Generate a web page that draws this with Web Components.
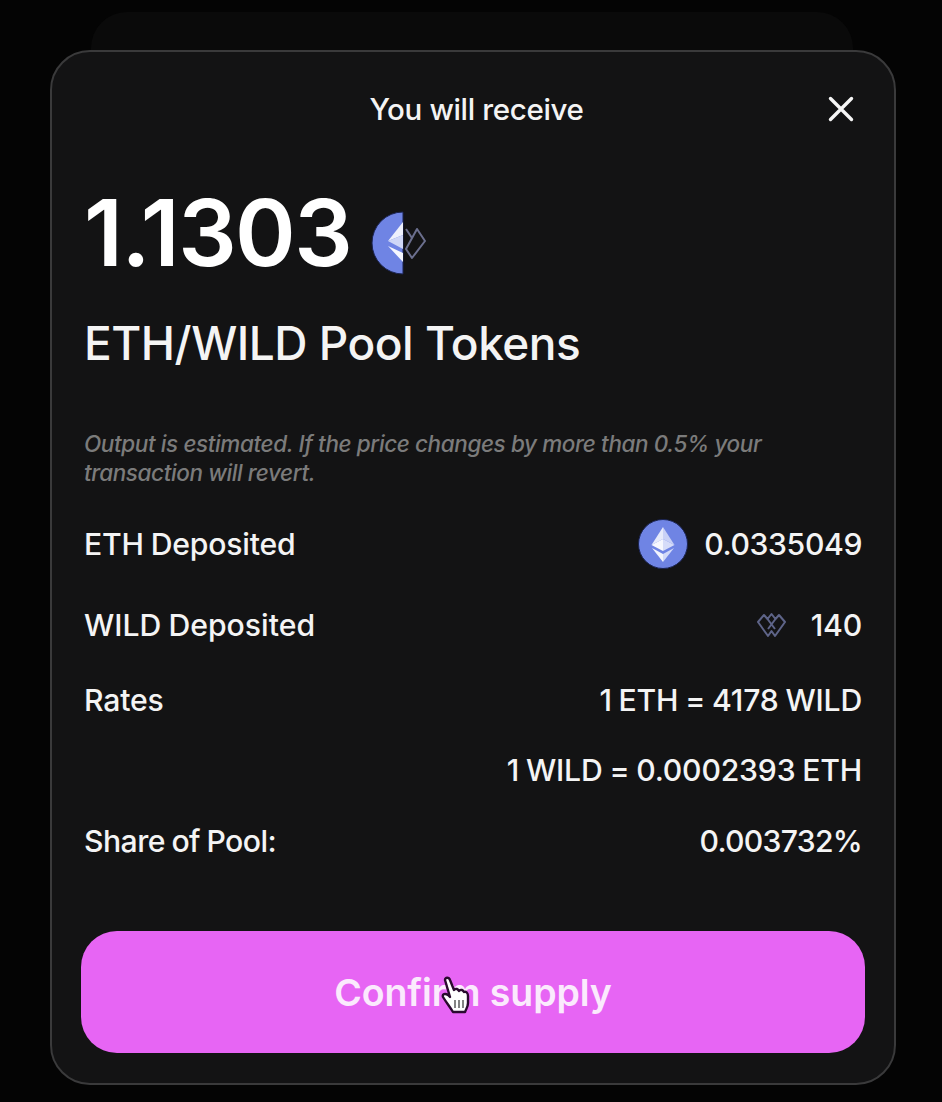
<!DOCTYPE html>
<html>
<head>
<meta charset="utf-8">
<style>
    html, body { margin: 0; padding: 0; background: #040404; }
    body { width: 942px; height: 1102px; overflow: hidden; font-family: Inter, "Liberation Sans", sans-serif; color: #f4f4f4; }
</style>
</head>
<body>
<supply-modal>
    <detail-row label="ETH Deposited" height="81" value-tracking="-0.4"><token-icon kind="eth" slot="icon"></token-icon>0.0335049</detail-row>
    <detail-row label="WILD Deposited" height="81" label-tracking="0"><token-icon kind="wild" slot="icon"></token-icon>140</detail-row>
    <detail-row label="Rates" height="70">1 ETH = 4178 WILD</detail-row>
    <detail-row height="70">1 WILD = 0.0002393 ETH</detail-row>
    <detail-row label="Share of Pool:" height="71" label-tracking="-0.55" value-tracking="-0.75">0.003732%</detail-row>
</supply-modal>

<script>
class TokenIcon extends HTMLElement {
    connectedCallback() {
        const shadow = this.attachShadow({ mode: 'open' })
        const eth = `
            <svg viewBox="0 0 50 50" width="50" height="50">
                <circle cx="25" cy="25" r="24.5" fill="#6f84e4" stroke="#1a2350" stroke-width="1"/>
                <path d="M25 8 13.500 26 25 20z" fill="#e6eafb"/>
                <path d="M25 8 36.500 26 25 20z" fill="#c9d1f6"/>
                <path d="M25 20 13.500 26 25 32z" fill="#f6f7fe"/>
                <path d="M25 20 36.500 26 25 32z" fill="#d6dcf9"/>
                <path d="M14 29 25 43 25 35z" fill="#f2f4fd"/>
                <path d="M36 29 25 43 25 35z" fill="#d3daf8"/>
            </svg>`
        const wild = `
            <svg class="wild" viewBox="0 0 29 26" width="29" height="26" fill="none" stroke="#5e6488" stroke-width="2" stroke-linejoin="round">
                <path d="M1 10 7 3 10.500 7 14.500 2 18.500 7 22 3 28 10 18 24 14.500 19 11 24z"/>
                <path d="M10.500 7 18 17M18.500 7 11 17"/>
            </svg>`
        shadow.innerHTML = `
            <style>
                :host { display: block; line-height: 0; }
                svg.wild { margin-right: 9px; margin-left: 1px; }
            </style>
            ${this.getAttribute('kind') === 'eth' ? eth : wild}
        `
    }
}

class DetailRow extends HTMLElement {
    connectedCallback() {
        const shadow = this.attachShadow({ mode: 'open' })
        const labelTracking = this.getAttribute('label-tracking') || '-0.2'
        const valueTracking = this.getAttribute('value-tracking') || '-0.2'
        shadow.innerHTML = `
            <style>
                :host {
                    display: flex;
                    align-items: center;
                    justify-content: space-between;
                    height: ${this.getAttribute('height')}px;
                    font-size: 30.200px;
                    font-weight: 500;
                    word-spacing: -1px;
                }
                .label { letter-spacing: ${labelTracking}px; }
                .value {
                    display: flex;
                    align-items: center;
                    gap: 16px;
                    letter-spacing: ${valueTracking}px;
                }
            </style>
            <span class="label">${this.getAttribute('label') || ''}</span>
            <span class="value"><slot name="icon"></slot><span><slot></slot></span></span>
        `
    }
}

class SupplyModal extends HTMLElement {
    connectedCallback() {
        const shadow = this.attachShadow({ mode: 'open' })
        shadow.innerHTML = `
            <style>
                :host {
                    display: block;
                    position: relative;
                    width: 942px;
                    height: 1102px;
                    box-sizing: border-box;
                    padding: 50px 46px 0 50px;
                }
                .back {
                    position: absolute;
                    left: 91px;
                    top: 12px;
                    width: 762px;
                    height: 80px;
                    background: #0a0a0a;
                    border-radius: 36px 36px 0 0;
                }
                .card {
                    position: relative;
                    box-sizing: border-box;
                    height: 1035px;
                    background: #131314;
                    border: 2px solid #3a3a3b;
                    border-radius: 40px;
                    padding: 0 29px;
                    display: flex;
                    flex-direction: column;
                }
                header {
                    height: 114px;
                    display: flex;
                    align-items: center;
                    justify-content: center;
                    position: relative;
                    padding-left: 7px;
                    font-size: 29.500px;
                    font-weight: 500;
                    letter-spacing: -0.35px;
                }
                .close {
                    position: absolute;
                    right: 11px;
                    top: 44px;
                }
                .body { padding: 0 3px 0 3px; }
                .amount {
                    display: flex;
                    align-items: center;
                    gap: 20px;
                    height: 96px;
                    margin-top: 18px;
                    font-size: 92px;
                    font-weight: 600;
                    letter-spacing: -1.6px;
                    color: #fff;
                }
                .amount svg { margin-top: 22px; }
                .pool {
                    margin-top: 38px;
                    font-size: 46px;
                    font-weight: 500;
                    line-height: 50px;
                    letter-spacing: -0.5px;
                }
                .note {
                    margin: 61px 0 0;
                    font-size: 22.500px;
                    font-weight: 500;
                    line-height: 29px;
                    font-style: italic;
                    color: #7b7b7b;
                    letter-spacing: -0.4px;
                }
                .rows { margin-top: 16px; }
                button {
                    display: block;
                    position: relative;
                    width: 784px;
                    height: 122px;
                    margin-top: 55px;
                    border: 0;
                    border-radius: 36px;
                    background: #e765f4;
                    color: #fbeafd;
                    font: 600 37.500px Inter, "Liberation Sans", sans-serif;
                    letter-spacing: -0.1px;
                }
                .cursor {
                    position: absolute;
                    left: 360px;
                    top: 45px;
                }
            </style>
            <div class="back"></div>
            <div class="card">
                <header>
                    You will receive
                    <svg class="close" viewBox="0 0 26 26" width="26" height="26" fill="none" stroke="#f6f6f6" stroke-width="3.400" stroke-linecap="round">
                        <path d="M2.500 2.500 23.500 23.500M23.500 2.500 2.500 23.500"/>
                    </svg>
                </header>
                <div class="body">
                    <div class="amount">
                        1.1303
                        <svg viewBox="0 0 56 64" width="56" height="64">
                            <path d="M32 1A31 31 0 0 0 32 63z" fill="#6f84e4" stroke="#1a2350" stroke-width="1"/>
                            <path d="M32 11 17 30 32 24z" fill="#eef1fc"/>
                            <path d="M32 24 17 30 32 38z" fill="#cfd7f7"/>
                            <path d="M17 35 32 51 32 42z" fill="#f6f7fe"/>
                            <path d="M46 18 54 30 41 47 35 38z" fill="none" stroke="#6b6f8e" stroke-width="2" stroke-linejoin="round"/>
                            <path d="M35 18 41 27" fill="none" stroke="#6b6f8e" stroke-width="2"/>
                        </svg>
                    </div>
                    <div class="pool">ETH/WILD Pool Tokens</div>
                    <p class="note">Output is estimated. If the price changes by more than 0.5% your transaction will revert.</p>
                    <div class="rows"><slot></slot></div>
                </div>
                <button>Confirm supply
                    <svg class="cursor" viewBox="0 0 30 38" width="30" height="38">
                        <path d="M4 4C4 1 8 1 9 4L13 14C15 12 17 13 18 15 20 13 22 14 23 16 25 15 27 17 27 20L27 27C27 31 25 33 24 36L12 36C9 31 5 26 2 21 1 18 4 17 7 19L9 21z" fill="#fff" stroke="#2a0a2e" stroke-width="2.400" stroke-linejoin="round"/>
                        <path d="M14 24V32M18 24V32M22 24V32" stroke="#666" stroke-width="1.600"/>
                    </svg>
                </button>
            </div>
        `
    }
}

customElements.define('token-icon', TokenIcon)
customElements.define('detail-row', DetailRow)
customElements.define('supply-modal', SupplyModal)
</script>
</body>
</html>
